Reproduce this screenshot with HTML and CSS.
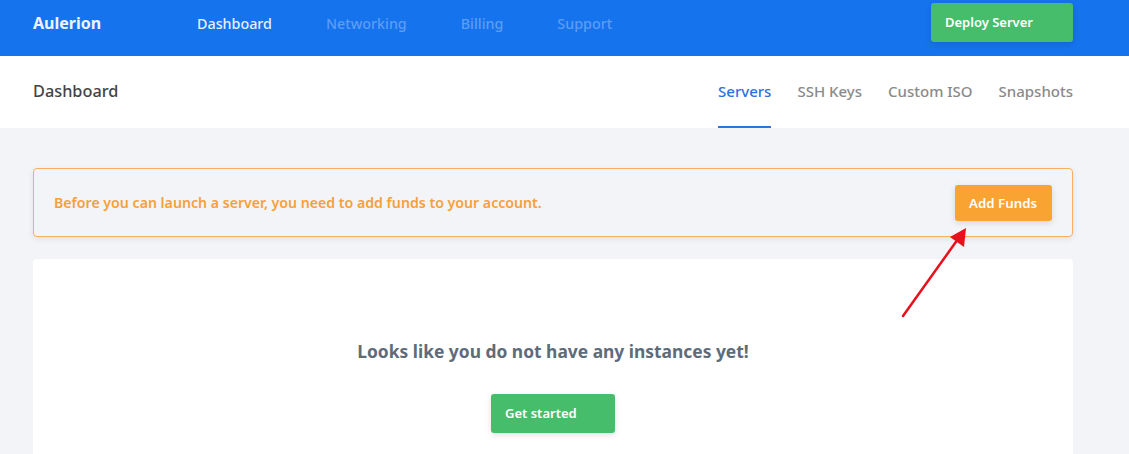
FILE: index.html
```html
<!DOCTYPE html>
<html>
<head>
<meta charset="utf-8">
<link rel="stylesheet" href="styles.css">
</head>
<body>
<header class="topbar">
  <div class="brand">Aulerion</div>
  <nav class="mainnav">
    <a class="mainnav-item active">Dashboard</a>
    <a class="mainnav-item">Networking</a>
    <a class="mainnav-item">Billing</a>
    <a class="mainnav-item">Support</a>
  </nav>
  <a class="btn btn-green btn-deploy">Deploy Server</a>
</header>
<div class="subheader">
  <h1 class="page-title">Dashboard</h1>
  <nav class="tabs">
    <a class="tab active">Servers</a>
    <a class="tab">SSH Keys</a>
    <a class="tab">Custom ISO</a>
    <a class="tab">Snapshots</a>
  </nav>
</div>
<main class="content">
  <div class="alert">
    <span class="alert-text">Before you can launch a server, you need to add funds to your account.</span>
    <a class="btn btn-orange">Add Funds</a>
  </div>
  <section class="card">
    <h2 class="empty-title">Looks like you do not have any instances yet!</h2>
    <a class="btn btn-green btn-start">Get started</a>
  </section>
</main>
<svg class="annotation" width="80" height="100" viewBox="0 0 80 100">
  <line x1="3" y1="91" x2="58" y2="14" stroke="#e8101a" stroke-width="2.5" stroke-linecap="round"/>
  <polygon points="66,3 64,22 50,12" fill="#e8101a"/>
</svg>
</body>
</html>
```
FILE: styles.css
```css
* { box-sizing: border-box; }
html, body { margin: 0; padding: 0; }
body {
  font-family: "Noto Sans", "Open Sans", sans-serif;
  background: #f3f4f7;
  width: 1129px;
  height: 454px;
  overflow: hidden;
  position: relative;
}
a { text-decoration: none; cursor: pointer; }

.topbar {
  height: 56px;
  background: #1673ee;
  display: flex;
  align-items: flex-start;
  padding: 0 56px 0 33px;
}
.brand {
  color: #eef4ff;
  font-weight: 700;
  font-size: 16px;
  line-height: 46px;
  width: 164px;
}
.mainnav { display: flex; flex: 1; }
.mainnav-item {
  color: #5c9df4;
  font-size: 14.3px;
  font-weight: 500;
  line-height: 47px;
  margin-right: 54px;
}
.mainnav-item.active { color: #e6efff; }

.btn {
  display: inline-block;
  color: #fff;
  font-weight: 600;
  font-size: 13px;
  border-radius: 3px;
  box-shadow: 0 2px 6px rgba(0,0,0,0.12);
}
.btn-green { background: #45bd6a; }
.btn-deploy {
  margin-top: 3px;
  width: 142px;
  height: 39px;
  line-height: 39px;
  padding-left: 14px;
}
.btn-orange {
  background: #f8a332;
  height: 36px;
  line-height: 36px;
  padding: 0 14px;
  width: 97px;
  font-size: 13.3px;
}

.subheader {
  height: 72px;
  background: #fff;
  display: flex;
  align-items: stretch;
  justify-content: space-between;
  padding: 0 56px 0 33px;
}
.page-title {
  margin: 0;
  font-size: 16.3px;
  font-weight: 500;
  color: #444;
  line-height: 70px;
}
.tabs { display: flex; gap: 26px; }
.tab {
  font-size: 15px;
  font-weight: 500;
  color: #8a8a8a;
  line-height: 70px;
  border-bottom: 2px solid transparent;
}
.tab.active { color: #2f6fe0; border-bottom-color: #2a74e6; }

.content { padding: 40px 56px 0 33px; }
.alert {
  height: 69px;
  border: 1px solid #f6b060;
  border-radius: 4px;
  background: #f3f4f7;
  box-shadow: 0 2px 6px rgba(0,0,0,0.08);
  display: flex;
  align-items: center;
  justify-content: space-between;
  padding: 0 20px 0 20px;
}
.alert-text {
  color: #f6a03c;
  font-size: 14.15px;
  font-weight: 600;
}
.card {
  margin-top: 22px;
  background: #fff;
  border-radius: 4px 4px 0 0;
  height: 195px;
  display: flex;
  flex-direction: column;
  align-items: center;
  padding-top: 78px;
}
.empty-title {
  margin: 0;
  font-size: 17.4px;
  font-weight: 700;
  color: #5e6b79;
  line-height: 28px;
}
.btn-start {
  margin-top: 29px;
  width: 124px;
  height: 39px;
  line-height: 39px;
  padding-left: 14px;
}

.annotation {
  position: absolute;
  left: 900px;
  top: 225px;
}
```
